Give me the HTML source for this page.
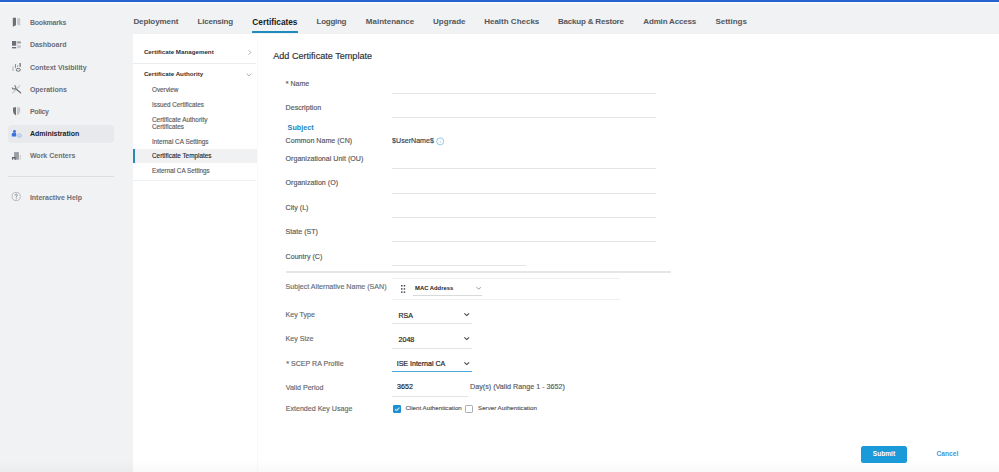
<!DOCTYPE html>
<html><head><meta charset="utf-8"><style>
html,body{margin:0;padding:0;width:999px;height:472px;overflow:hidden;background:#f1f2f4}
.t{position:absolute;white-space:nowrap;line-height:1;font-family:"Liberation Sans",sans-serif}
.n{-webkit-text-stroke:0.15px currentColor}
</style></head><body>
<div style="position:absolute;left:0.00px;top:0.00px;width:999.00px;height:472.00px;background:#f1f2f4"></div>
<div style="position:absolute;left:0.00px;top:0.00px;width:999.00px;height:2.20px;background:#2563cf"></div>
<div style="position:absolute;left:0.00px;top:2.20px;width:999.00px;height:1.80px;background:#f8f9fb"></div>
<div style="position:absolute;left:133.00px;top:34.00px;width:124.00px;height:438.00px;background:#fff"></div>
<div style="position:absolute;left:257.00px;top:34.00px;width:742.00px;height:438.00px;background:#fff"></div>
<div style="position:absolute;left:256.50px;top:34.00px;width:0.80px;height:438.00px;background:#f8f9fa"></div>
<div style="position:absolute;left:8.00px;top:125.00px;width:106.00px;height:17.50px;background:#e8e9ec;border-radius:4px"></div>
<div style="position:absolute;left:8.00px;top:176.00px;width:106.00px;height:0.80px;background:#dcdee2"></div>
<div class="t" style="left:29.90px;top:19.00px;font-size:7.0px;font-weight:bold;color:#6b6e74;letter-spacing:-0.2px">Bookmarks</div>
<div class="t" style="left:29.90px;top:41.00px;font-size:7.0px;font-weight:bold;color:#6b6e74;">Dashboard</div>
<div class="t" style="left:29.90px;top:64.00px;font-size:7.0px;font-weight:bold;color:#6b6e74;">Context Visibility</div>
<div class="t" style="left:29.90px;top:86.00px;font-size:7.0px;font-weight:bold;color:#6b6e74;">Operations</div>
<div class="t" style="left:29.90px;top:108.00px;font-size:7.0px;font-weight:bold;color:#6b6e74;letter-spacing:-0.3px">Policy</div>
<div class="t" style="left:29.90px;top:130.00px;font-size:7.0px;font-weight:bold;color:#1f2226;">Administration</div>
<div class="t" style="left:29.90px;top:152.00px;font-size:7.0px;font-weight:bold;color:#6b6e74;">Work Centers</div>
<div class="t" style="left:29.90px;top:194.00px;font-size:7.0px;font-weight:bold;color:#6b6e74;">Interactive Help</div>
<svg style="position:absolute;left:0;top:0" width="30" height="210" viewBox="0 0 30 210">
<path d="M12.8 17.8 H16 V25.2 L12.8 26.8 Z" fill="#6d7075"/>
<path d="M17.2 18.2 H20.2 V25.8 L17.2 24.6 Z" fill="#c5c7cb"/>
<rect x="12" y="41" width="4.2" height="4.7" fill="#6d7075"/>
<rect x="12" y="47" width="4.2" height="1.4" fill="#6d7075"/>
<rect x="17.2" y="41.3" width="3.6" height="2.2" fill="#9a9da1"/>
<rect x="17.2" y="45.2" width="3.6" height="3" fill="#c5c7cb"/>
<rect x="12.2" y="66.4" width="1.5" height="4.6" fill="#c5c7cb"/>
<rect x="14.9" y="64.1" width="1.1" height="3.8" fill="#8a8d91"/>
<rect x="17.2" y="65.3" width="0.9" height="1.5" fill="#8a8d91"/>
<rect x="19.5" y="63" width="1.3" height="3.8" fill="#6d7075"/>
<ellipse cx="18.3" cy="69.8" rx="2.1" ry="1.4" fill="none" stroke="#6d7075" stroke-width="1"/>
<path d="M19.9 85.6 L12.6 93" stroke="#c5c7cb" stroke-width="1.1" stroke-linecap="round"/>
<path d="M20.6 92.8 L15.4 88.6" stroke="#6d7075" stroke-width="1.3" stroke-linecap="round"/>
<path d="M14.16 85.5 A1.8 1.8 0 1 1 12.2 87.46" fill="none" stroke="#7b7e82" stroke-width="1.2"/>
<path d="M16 107 V115.4 Q13 114 13 110.5 V107.8 Z" fill="#6d7075"/>
<path d="M17 107 V115.4 Q20.2 114 20.2 110.5 V107.8 Z" fill="#c5c7cb"/>
<circle cx="14.5" cy="131.3" r="1.4" fill="#3d72d6"/>
<path d="M11.8 136.6 V134.2 Q11.8 132.4 13.6 132.4 H15.4 Q16.2 132.4 16.2 134 V136.6 Z" fill="#3d72d6"/>
<circle cx="19.5" cy="135.6" r="1.7" fill="#d6e2f5" stroke="#8aaee6" stroke-width="0.8"/>
<rect x="14.1" y="152.1" width="4.8" height="7.6" fill="#9a9da1"/>
<path d="M12 159.7 V157 H15.6 V159.7 H14.6 V158.4 H13 V159.7 Z" fill="#5f6267"/>
<rect x="19.8" y="155" width="1" height="4.5" fill="#c5c7cb"/>
<circle cx="16.2" cy="196.5" r="4.1" fill="none" stroke="#a9acb0" stroke-width="0.8"/>
<path d="M15.1 195.4 Q15.1 194.2 16.2 194.2 Q17.3 194.2 17.3 195.2 Q17.3 196 16.3 196.5 V197.6" fill="none" stroke="#7d8084" stroke-width="0.85"/>
<rect x="15.8" y="198.4" width="0.9" height="0.9" fill="#85888c"/>
</svg>
<div class="t" style="left:133.40px;top:18.00px;font-size:8px;font-weight:bold;color:#54575c;letter-spacing:-0.089px">Deployment</div>
<div class="t" style="left:197.50px;top:18.00px;font-size:8px;font-weight:bold;color:#54575c;letter-spacing:-0.218px">Licensing</div>
<div class="t" style="left:252.30px;top:18.00px;font-size:8.3px;font-weight:bold;color:#17191c;">Certificates</div>
<div class="t" style="left:316.50px;top:18.00px;font-size:8px;font-weight:bold;color:#54575c;letter-spacing:-0.258px">Logging</div>
<div class="t" style="left:365.80px;top:18.00px;font-size:8px;font-weight:bold;color:#54575c;">Maintenance</div>
<div class="t" style="left:433.10px;top:18.00px;font-size:8px;font-weight:bold;color:#54575c;">Upgrade</div>
<div class="t" style="left:484.20px;top:18.00px;font-size:8px;font-weight:bold;color:#54575c;">Health Checks</div>
<div class="t" style="left:558.00px;top:18.00px;font-size:8px;font-weight:bold;color:#54575c;letter-spacing:-0.195px">Backup &amp; Restore</div>
<div class="t" style="left:643.30px;top:18.00px;font-size:8px;font-weight:bold;color:#54575c;letter-spacing:-0.167px">Admin Access</div>
<div class="t" style="left:715.40px;top:18.00px;font-size:8px;font-weight:bold;color:#54575c;">Settings</div>
<div style="position:absolute;left:252.40px;top:31.00px;width:45.60px;height:2.40px;background:#1f8bbd;border-radius:0.5px"></div>
<div class="t" style="left:143.90px;top:49.00px;font-size:6.2px;font-weight:bold;color:#2d3035;">Certificate Management</div>
<div class="t" style="left:143.90px;top:71.00px;font-size:6.2px;font-weight:bold;color:#2d3035;">Certificate Authority</div>
<div style="position:absolute;left:133.00px;top:63.00px;width:123.30px;height:0.80px;background:#ebecee"></div>
<svg style="position:absolute;left:246px;top:49px" width="8" height="30" viewBox="0 0 8 30"><polyline points="2.6,1.2 4.8,3.4 2.6,5.6" fill="none" stroke="#8a8d91" stroke-width="0.7"/><polyline points="0.7,24.6 3,26.9 5.3,24.6" fill="none" stroke="#8a8d91" stroke-width="0.7"/></svg>
<div style="position:absolute;left:133.00px;top:180.00px;width:123.30px;height:0.80px;background:#eeeff1"></div>
<div style="position:absolute;left:133.40px;top:148.70px;width:123.60px;height:14.30px;background:#f0f1f3"></div>
<div style="position:absolute;left:133.20px;top:148.70px;width:2.00px;height:14.30px;background:#2a8ab3"></div>
<div class="t n" style="left:152.00px;top:87.00px;font-size:6.3px;font-weight:normal;color:#5a5d62;">Overview</div>
<div class="t n" style="left:152.00px;top:102.00px;font-size:6.3px;font-weight:normal;color:#5a5d62;">Issued Certificates</div>
<div class="t n" style="left:152.00px;top:117.00px;font-size:6.4px;font-weight:normal;color:#5a5d62;">Certificate Authority</div>
<div class="t n" style="left:152.00px;top:124.00px;font-size:6.4px;font-weight:normal;color:#5a5d62;">Certificates</div>
<div class="t n" style="left:152.00px;top:139.00px;font-size:6.4px;font-weight:normal;color:#5a5d62;">Internal CA Settings</div>
<div class="t" style="left:152.00px;top:153.00px;font-size:6.4px;font-weight:normal;color:#1f2226;-webkit-text-stroke:0.12px #1f2226">Certificate Templates</div>
<div class="t n" style="left:152.00px;top:168.00px;font-size:6.3px;font-weight:normal;color:#5a5d62;">External CA Settings</div>
<div class="t n" style="left:273.20px;top:52.00px;font-size:9.1px;font-weight:normal;color:#2b2e33;">Add Certificate Template</div>
<div class="t n" style="left:285.80px;top:80.00px;font-size:7.0px;font-weight:normal;color:#55585d;">* Name</div>
<div class="t n" style="left:285.60px;top:105.00px;font-size:7.1px;font-weight:normal;color:#55585d;">Description</div>
<div class="t" style="left:287.60px;top:124.00px;font-size:7.2px;font-weight:bold;color:#1f82bd;">Subject</div>
<div class="t n" style="left:285.60px;top:138.00px;font-size:7.1px;font-weight:normal;color:#55585d;">Common Name (CN)</div>
<div class="t n" style="left:392.10px;top:138.00px;font-size:7.1px;font-weight:normal;color:#3a3d42;">$UserName$</div>
<div class="t n" style="left:285.60px;top:156.00px;font-size:7.1px;font-weight:normal;color:#55585d;">Organizational Unit (OU)</div>
<div class="t n" style="left:285.60px;top:180.00px;font-size:7.1px;font-weight:normal;color:#55585d;">Organization (O)</div>
<div class="t n" style="left:285.60px;top:205.00px;font-size:7.1px;font-weight:normal;color:#55585d;">City (L)</div>
<div class="t n" style="left:285.60px;top:229.00px;font-size:7.1px;font-weight:normal;color:#55585d;">State (ST)</div>
<div class="t n" style="left:285.60px;top:254.00px;font-size:7.1px;font-weight:normal;color:#55585d;">Country (C)</div>
<div class="t n" style="left:285.60px;top:284.00px;font-size:7.1px;font-weight:normal;color:#6a6d72;">Subject Alternative Name (SAN)</div>
<div style="position:absolute;left:392.30px;top:92.50px;width:263.50px;height:1.00px;background:#e4e4e5"></div>
<div style="position:absolute;left:392.30px;top:116.90px;width:263.50px;height:1.00px;background:#e4e4e5"></div>
<div style="position:absolute;left:392.30px;top:167.90px;width:263.50px;height:1.00px;background:#e4e4e5"></div>
<div style="position:absolute;left:392.30px;top:192.50px;width:263.50px;height:1.00px;background:#e4e4e5"></div>
<div style="position:absolute;left:392.30px;top:216.50px;width:263.50px;height:1.00px;background:#e4e4e5"></div>
<div style="position:absolute;left:392.30px;top:240.50px;width:263.50px;height:1.00px;background:#e4e4e5"></div>
<div style="position:absolute;left:392.30px;top:265.00px;width:134.20px;height:1.00px;background:#e4e4e5"></div>
<div style="position:absolute;left:285.50px;top:271.20px;width:385.00px;height:1.60px;background:#e4e5e6"></div>
<div style="position:absolute;left:392.30px;top:277.60px;width:228.00px;height:1.00px;background:#eeeff0"></div>
<div style="position:absolute;left:392.30px;top:299.10px;width:228.00px;height:1.00px;background:#eeeff0"></div>
<svg style="position:absolute;left:436px;top:137px" width="9" height="9" viewBox="0 0 9 9"><circle cx="4.2" cy="4.4" r="3.5" fill="none" stroke="#74bde6" stroke-width="0.8"/><rect x="3.85" y="3.9" width="0.7" height="2.2" fill="#b8c8d4"/><rect x="3.85" y="2.7" width="0.7" height="0.6" fill="#b8c8d4"/></svg>
<svg style="position:absolute;left:400px;top:284px" width="6" height="10" viewBox="0 0 6 10"><rect x="1" y="1" width="1.5" height="1.5" fill="#4a4a4a"/><rect x="1" y="4.2" width="1.5" height="1.5" fill="#4a4a4a"/><rect x="1" y="7.4" width="1.5" height="1.5" fill="#4a4a4a"/><rect x="3.7" y="1" width="1.5" height="1.5" fill="#4a4a4a"/><rect x="3.7" y="4.2" width="1.5" height="1.5" fill="#4a4a4a"/><rect x="3.7" y="7.4" width="1.5" height="1.5" fill="#4a4a4a"/></svg>
<div class="t" style="left:415.10px;top:286.00px;font-size:5.85px;font-weight:bold;color:#222;">MAC Address</div>
<svg style="position:absolute;left:475.4px;top:286.4px" width="7.3" height="4.4" viewBox="0 0 7.3 4.4"><polyline points="1.4,1.4 3.65,3.0 5.8999999999999995,1.4" fill="none" stroke="#7a7d81" stroke-width="0.75"/></svg>
<div style="position:absolute;left:413.00px;top:295.00px;width:68.70px;height:0.80px;background:#d8d9db"></div>
<div class="t n" style="left:285.50px;top:312.00px;font-size:7.1px;font-weight:normal;color:#66696e;">Key Type</div>
<div class="t" style="left:398.50px;top:312.00px;font-size:7.0px;font-weight:normal;color:#1f1f1f;-webkit-text-stroke:0.2px #1f1f1f">RSA</div>
<svg style="position:absolute;left:462.9px;top:312.2px" width="7.5" height="5.0" viewBox="0 0 7.5 5.0"><polyline points="1.4,1.4 3.75,3.6 6.1,1.4" fill="none" stroke="#404347" stroke-width="1.1"/></svg>
<div style="position:absolute;left:392.30px;top:323.10px;width:79.30px;height:1.00px;background:#e4e4e5"></div>
<div class="t n" style="left:285.50px;top:336.00px;font-size:7.1px;font-weight:normal;color:#66696e;">Key Size</div>
<div class="t" style="left:398.50px;top:337.00px;font-size:7.1px;font-weight:normal;color:#1f1f1f;-webkit-text-stroke:0.2px #1f1f1f">2048</div>
<svg style="position:absolute;left:462.9px;top:336.4px" width="7.5" height="5.0" viewBox="0 0 7.5 5.0"><polyline points="1.4,1.4 3.75,3.6 6.1,1.4" fill="none" stroke="#404347" stroke-width="1.1"/></svg>
<div style="position:absolute;left:392.30px;top:347.50px;width:79.30px;height:1.00px;background:#e4e4e5"></div>
<div class="t n" style="left:286.20px;top:361.00px;font-size:7.1px;font-weight:normal;color:#66696e;">* SCEP RA Profile</div>
<div class="t" style="left:396.70px;top:360.00px;font-size:7.05px;font-weight:normal;color:#1f1f1f;-webkit-text-stroke:0.2px #1f1f1f">ISE Internal CA</div>
<svg style="position:absolute;left:462.9px;top:360.6px" width="7.5" height="5.0" viewBox="0 0 7.5 5.0"><polyline points="1.4,1.4 3.75,3.6 6.1,1.4" fill="none" stroke="#404347" stroke-width="1.1"/></svg>
<div style="position:absolute;left:392.30px;top:371.00px;width:79.30px;height:1.20px;background:#4aa6d8"></div>
<div class="t n" style="left:285.70px;top:385.00px;font-size:7.1px;font-weight:normal;color:#66696e;">Valid Period</div>
<div class="t" style="left:397.10px;top:384.00px;font-size:7.1px;font-weight:normal;color:#1f1f1f;-webkit-text-stroke:0.2px #1f1f1f">3652</div>
<div style="position:absolute;left:392.30px;top:396.00px;width:75.40px;height:1.00px;background:#e4e4e5"></div>
<div class="t n" style="left:470.00px;top:383.00px;font-size:7.2px;font-weight:normal;color:#55585d;">Day(s) (Valid Range 1 - 3652)</div>
<div class="t n" style="left:285.70px;top:406.00px;font-size:7.1px;font-weight:normal;color:#66696e;">Extended Key Usage</div>
<svg style="position:absolute;left:392.6px;top:404.6px" width="8" height="8" viewBox="0 0 8 8"><rect x="0" y="0" width="8" height="8" rx="1.3" fill="#1b8fd0"/><polyline points="2,4.3 3.6,5.5 6.4,2.6" fill="none" stroke="#c4eafc" stroke-width="1.1"/></svg>
<div class="t n" style="left:405.40px;top:405.00px;font-size:6.2px;font-weight:normal;color:#55585d;">Client Authentication</div>
<div style="position:absolute;left:464.80px;top:404.60px;width:8.10px;height:8.00px;box-sizing:border-box;border:0.8px solid #a9acb0;border-radius:1.2px;background:#fff"></div>
<div class="t n" style="left:478.00px;top:405.00px;font-size:6.2px;font-weight:normal;color:#55585d;">Server Authentication</div>
<div style="position:absolute;left:860.80px;top:445.90px;width:46.20px;height:16.80px;background:#1a9ad8;border-radius:2.5px"></div>
<div class="t" style="left:872.80px;top:451.00px;font-size:6.6px;font-weight:bold;color:#fff;">Submit</div>
<div class="t" style="left:936.60px;top:451.00px;font-size:6.6px;font-weight:bold;color:#4595d6;">Cancel</div>
<div style="position:absolute;left:0.00px;top:461.00px;width:999.00px;height:11.00px;background:linear-gradient(to bottom, rgba(0,0,0,0), rgba(0,0,0,0.028))"></div>
</body></html>
